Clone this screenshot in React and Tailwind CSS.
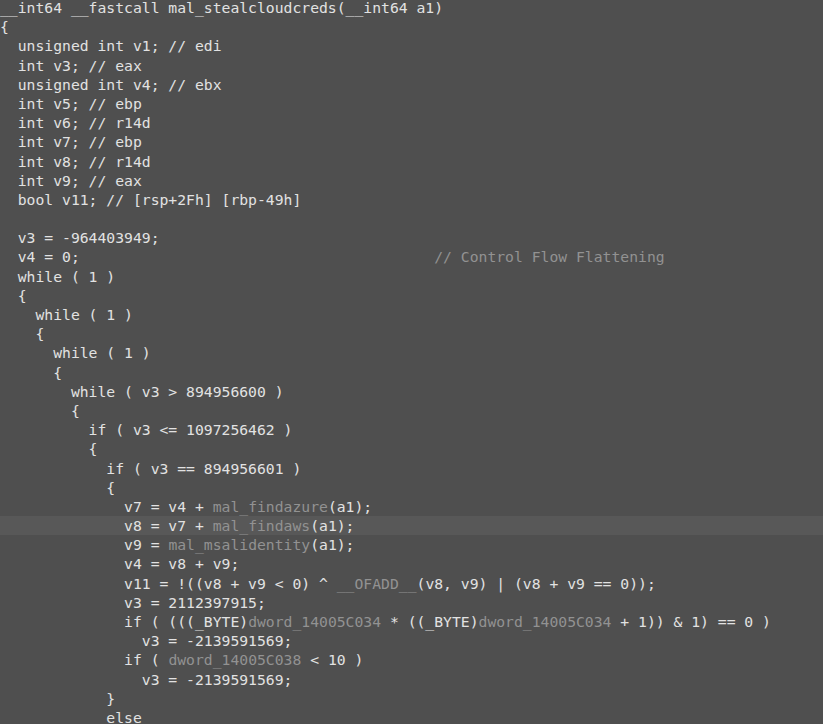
import React from 'react';

// grey (name / comment) parts are wrapped in ~ ~
const lines = [
  '__int64 __fastcall mal_stealcloudcreds(__int64 a1)',
  '{',
  '  unsigned int v1; // edi',
  '  int v3; // eax',
  '  unsigned int v4; // ebx',
  '  int v5; // ebp',
  '  int v6; // r14d',
  '  int v7; // ebp',
  '  int v8; // r14d',
  '  int v9; // eax',
  '  bool v11; // [rsp+2Fh] [rbp-49h]',
  '',
  '  v3 = -964403949;',
  '  v4 = 0;                                        ~// Control Flow Flattening~',
  '  while ( 1 )',
  '  {',
  '    while ( 1 )',
  '    {',
  '      while ( 1 )',
  '      {',
  '        while ( v3 > 894956600 )',
  '        {',
  '          if ( v3 <= 1097256462 )',
  '          {',
  '            if ( v3 == 894956601 )',
  '            {',
  '              v7 = v4 + ~mal_findazure~(a1);',
  '              v8 = v7 + ~mal_findaws~(a1);',
  '              v9 = ~mal_msalidentity~(a1);',
  '              v4 = v8 + v9;',
  '              v11 = !((v8 + v9 < 0) ^ ~__OFADD__~(v8, v9) | (v8 + v9 == 0));',
  '              v3 = 2112397915;',
  '              if ( (((_BYTE)~dword_14005C034~ * ((_BYTE)~dword_14005C034~ + 1)) & 1) == 0 )',
  '                v3 = -2139591569;',
  '              if ( ~dword_14005C038~ < 10 )',
  '                v3 = -2139591569;',
  '            }',
  '            else',
];

const highlighted = 27;

const CodeLine = ({ text, active }) => {
  const parts = text.split('~');
  return (
    <div className={active ? 'h-[19.2px] bg-[#585858]' : 'h-[19.2px]'}>
      {parts.map((p, i) =>
        i % 2 === 1 ? (
          <span key={i} className="text-[#929292]">{p}</span>
        ) : (
          <span key={i}>{p}</span>
        )
      )}
      {text === '' ? ' ' : null}
    </div>
  );
};

export default function App() {
  return (
    <div className="w-[823px] h-[724px] overflow-hidden bg-[#4f4f4f]">
      <pre
        className="m-0 -mt-[2px] whitespace-pre text-[14.72px] leading-[19.2px] text-[#e2e2e2]"
        style={{ fontFamily: '"DejaVu Sans Mono", "Liberation Mono", monospace' }}
      >
        {lines.map((t, i) => (
          <CodeLine key={i} text={t} active={i === highlighted} />
        ))}
      </pre>
    </div>
  );
}
